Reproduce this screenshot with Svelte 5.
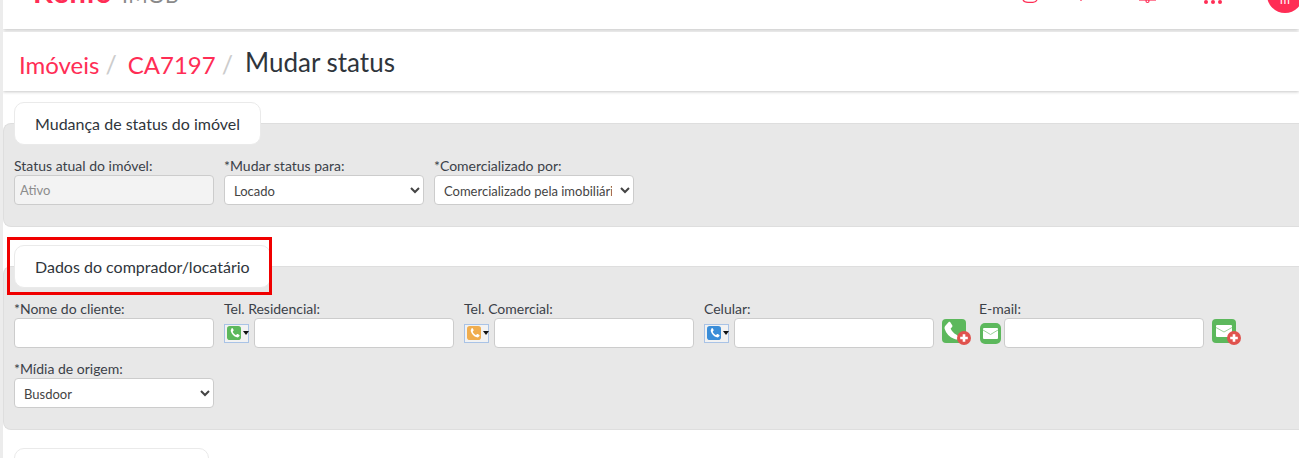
<script>
  const phones = [
    { label: 'Tel. Residencial:', color: '#5cb85c' },
    { label: 'Tel. Comercial:', color: '#f0ad4e' },
    { label: 'Celular:', color: '#3a8dd8' }
  ];
  const phonePath = 'M6.600 3.200c.5-.4 1.200-.4 1.500.2l1.300 2.100c.3.5.2 1-.2 1.400l-.8.8c-.2.2-.2.4-.1.7.9 1.900 2.400 3.400 4.300 4.300.3.1.5.1.7-.1l.8-.8c.4-.4.9-.5 1.400-.2l2.100 1.300c.6.3.6 1 .2 1.500l-1 1.100c-.7.7-1.700 1-2.700.7-4.300-1.200-7.500-4.400-8.700-8.700-.3-1 0-2 .7-2.700z';
</script>

<div class="page">
  <header class="top">
    <div class="logo"><span class="k">Kenlo</span><span class="i">IMOB</span></div>
    <div class="tools">
      <svg class="w" viewBox="0 0 20 6"><path d="M1 0c1 2 2.500 2.400 5 2.400h5c2 0 3-.4 4-2.400" /></svg>
      <svg class="p" viewBox="0 0 20 6"><path d="M10 0v1" /></svg>
      <svg class="b" viewBox="0 0 20 6"><path d="M1 0h17" /><circle cx="9.500" cy="1" r="1.500" /></svg>
      <span class="dots"><i></i><i></i><i></i></span>
      <span class="avatar"><span>m</span></span>
    </div>
  </header>

  <nav class="crumbs">
    <a href="#a">Imóveis</a><span class="sep">/</span>
    <a href="#b">CA7197</a><span class="sep">/</span>
    <span class="cur">Mudar status</span>
  </nav>

  <section class="block first">
    <h3 class="tab">Mudança de status do imóvel</h3>
    <div class="panel">
      <div class="row">
        <div class="field">
          <label for="s1">Status atual do imóvel:</label>
          <input id="s1" class="ctl off" value="Ativo" disabled />
        </div>
        <div class="field">
          <label for="s2">*Mudar status para:</label>
          <select id="s2" class="ctl"><option>Locado</option></select>
        </div>
        <div class="field">
          <label for="s3">*Comercializado por:</label>
          <select id="s3" class="ctl"><option>Comercializado pela imobiliária</option></select>
        </div>
      </div>
    </div>
  </section>

  <section class="block second">
    <h3 class="tab">Dados do comprador/locatário</h3>
    <div class="mark"></div>
    <div class="panel">
      <div class="row contact">
        <div class="field">
          <label for="n">*Nome do cliente:</label>
          <input id="n" class="ctl" />
        </div>
        {#each phones as p, i}
          <div class="field">
            <label for={'t' + i}>{p.label}</label>
            <div class="combo">
              <span class="pick">
                <svg class="ico" viewBox="0 0 20 20"><rect width="20" height="20" rx="4" fill={p.color} /><path d={phonePath} fill="#fff" /></svg>
                <b class="caret"></b>
              </span>
              <input id={'t' + i} class="ctl" />
            </div>
          </div>
        {/each}
        <svg class="add" viewBox="0 0 30 27">
          <rect width="24" height="24" rx="4" fill="#5cb85c" />
          <path d="M6.500 3.200c.7-.6 1.600-.5 2 .3l1.700 2.800c.4.700.3 1.300-.3 1.900l-1 1c-.3.300-.3.500-.1.900 1.200 2.500 3.200 4.500 5.700 5.700l3 2.500-2 2c-.9.800-2.200-.2-3.500-.5-4.600-2-7.800-5.300-9.300-9.900-.4-1.300 0-2.600.9-3.500z" fill="#fff" />
          <circle cx="22" cy="19" r="7" fill="#e0524d" />
          <path d="M22 15.200v7.600M18.200 19h7.600" stroke="#fff" stroke-width="2.600" />
        </svg>
        <div class="field">
          <label for="e">E-mail:</label>
          <div class="combo mail">
            <svg class="env" viewBox="0 0 21 21">
              <rect width="21" height="21" rx="5" fill="#5cb85c" />
              <rect x="3" y="5" width="15" height="11" rx="1" fill="#fff" />
              <path d="M3 7l7.500 4.500L18 7" fill="none" stroke="#9ad39a" stroke-width="1" />
            </svg>
            <input id="e" class="ctl" />
          </div>
        </div>
        <svg class="add" viewBox="0 0 30 27">
          <rect width="24" height="24" rx="4" fill="#5cb85c" />
          <rect x="4" y="6" width="16" height="12" rx="1" fill="#fff" />
          <path d="M4 8.500 12 13l8-4.500" fill="none" stroke="#9ad39a" stroke-width="1" />
          <circle cx="22" cy="19" r="7" fill="#e0524d" />
          <path d="M22 15.200v7.600M18.200 19h7.600" stroke="#fff" stroke-width="2.600" />
        </svg>
      </div>
      <div class="row">
        <div class="field">
          <label for="m">*Mídia de origem:</label>
          <select id="m" class="ctl"><option>Busdoor</option></select>
        </div>
      </div>
    </div>
  </section>

  <section class="block third">
    <div class="tab stub"></div>
  </section>
</div>

<style>
  :global(body) {
    margin: 0;
    background: #fff;
    overflow: hidden;
  }
  .page {
    height: 458px;
    overflow: hidden;
    font-family: Lato, "Open Sans", sans-serif;
    color: #2f353b;
    border-left: 3px solid #ececec;
    box-sizing: border-box;
    width: 1299px;
  }
  .top {
    height: 29px;
    margin-bottom: 3px;
    display: flex;
    justify-content: space-between;
    align-items: flex-end;
    background: #fff;
    box-shadow: 0 1px 4px rgba(0, 0, 0, .26);
    position: relative;
  }
  .logo {
    margin: -30px 0 25px 30px;
    line-height: 24px;
    white-space: nowrap;
    height: 24px;
  }
  .k { color: #ff2d55; font-size: 29px; font-weight: 700; letter-spacing: 1.100px; }
  .i { color: #8a8a8a; font-size: 21px; margin-left: 9px; letter-spacing: .3px; }
  .tools {
    align-self: flex-start;
    height: 29px;
    position: relative;
    width: 290px;
    flex: none;
  }
  .tools svg {
    position: absolute;
    width: 20px;
    height: 6px;
    top: 0;
    fill: none;
    stroke: #ff2d55;
    stroke-width: 1.200;
  }
  .w { left: 13px; }
  .p { left: 62px; }
  .b { left: 129px; }
  .dots { position: absolute; left: 195px; top: 0; display: flex; gap: 3px; }
  .dots i { width: 4px; height: 4px; border-radius: 50%; background: #ff2d55; }
  .avatar {
    position: absolute;
    left: 258px;
    top: -23px;
    width: 36px;
    height: 36px;
    border-radius: 50%;
    background: #ff2d55;
    color: #fff;
    font-size: 12px;
    text-align: center;
    line-height: 46px;
  }
  .crumbs {
    height: 59px;
    background: #fff;
    box-shadow: 0 1px 3px rgba(0, 0, 0, .22);
    display: flex;
    align-items: baseline;
    padding: 16px 0 0 16px;
    box-sizing: border-box;
    font-size: 24px;
    position: relative;
  }
  .crumbs a { color: #ff2d55; text-decoration: none; }
  .sep { color: #ccc; margin: 0 11px 0 6px; font-size: 25px; }
  .cur { font-size: 26px; color: #2f353b; position: relative; top: -2px; margin-left: 1px; }
  .block { position: relative; }
  .first { margin-top: 11px; }
  .second { margin-top: 18px; }
  .third { margin-top: 18px; }
  .tab {
    display: block;
    position: relative;
    z-index: 1;
    margin: 0 0 -22px 11px;
    width: fit-content;
    height: 43px;
    box-sizing: border-box;
    padding: 0 20px;
    line-height: 42px;
    font-size: 16px;
    font-weight: 400;
    color: #2f353b;
    background: #fff;
    border: 1px solid #eaeaea;
    border-radius: 10px;
  }
  .mark {
    position: absolute;
    z-index: 2;
    left: 4px;
    top: -8px;
    width: 265px;
    height: 58px;
    border: 3px solid #f00000;
    box-sizing: border-box;
    pointer-events: none;
  }
  .panel {
    background: #e8e8e8;
    border: 1px solid #dedede;
    border-right: 0;
    border-radius: 8px 0 0 8px;
    padding: 33px 0 21px 10px;
    box-sizing: border-box;
  }
  .first .panel { height: 104px; }
  .second .panel { height: 164px; }
  .row { display: flex; gap: 10px; align-items: flex-start; }
  .row + .row { margin-top: 12px; }
  .field { display: flex; flex-direction: column; }
  label {
    font-size: 14px;
    line-height: 18px;
    color: #3b4148;
    height: 18px;
  }
  .ctl {
    width: 200px;
    height: 30px;
    box-sizing: border-box;
    border: 1px solid #ccc;
    border-radius: 4px;
    background: #fff;
    font-family: inherit;
    font-size: 13px;
    color: #444;
    padding: 1px 5px 0;
  }
  .off { background: #f3f3f3; color: #8c8c8c; padding-top: 0; }
  .combo { display: flex; align-items: center; gap: 5px; }
  .pick {
    width: 25px;
    height: 19px;
    box-sizing: border-box;
    border: 1px solid #a9c3e6;
    background: #f2f2f2;
    display: flex;
    align-items: center;
    padding-left: 2px;
    gap: 2px;
  }
  .ico { width: 14px; height: 14px; display: block; flex: none; }
  .caret { width: 0; height: 0; border: 3px solid transparent; border-top: 4px solid #111; border-bottom: 0; }
  .add { width: 30px; height: 27px; margin: 19px -3px 0 -2px; flex: none; }
  .mail { gap: 3px; }
  .env { width: 21px; height: 21px; display: block; margin-left: 1px; }
  .stub { height: 30px; width: 195px; }
</style>
